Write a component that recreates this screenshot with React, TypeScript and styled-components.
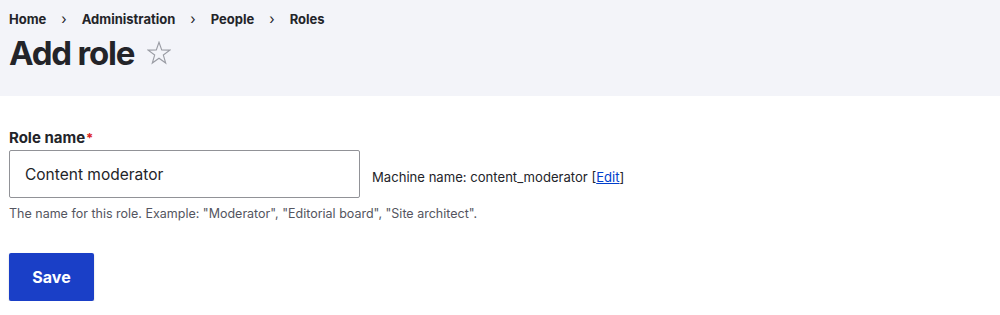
import React from 'react';
import styled, { createGlobalStyle } from 'styled-components';

const GlobalStyle = createGlobalStyle`
    body {
        margin: 0;
        background: #ffffff;
        font-family: Inter, "Liberation Sans", sans-serif;
        color: #232429;
    }
`;

const crumbs = ['Home', 'Administration', 'People', 'Roles'];

const App = () => {
    return (
        <>
            <GlobalStyle />
            <Header>
                <Breadcrumb>
                    {crumbs.map((c, i) => (
                        <React.Fragment key={c}>
                            {i > 0 && <Sep>›</Sep>}
                            <Crumb>{c}</Crumb>
                        </React.Fragment>
                    ))}
                </Breadcrumb>
                <TitleRow>
                    <Title>Add role</Title>
                    <Star viewBox="0 0 24 24" aria-label="Add to shortcuts">
                        <path
                            d="M12 1.2 L14.7 9 L22.8 9.1 L16.3 14 L18.7 22 L12 17.2 L5.3 22 L7.7 14 L1.2 9.1 L9.3 9 Z"
                            fill="none"
                            stroke="#9a9ca4"
                            strokeWidth="1.1"
                            strokeLinejoin="miter"
                        />
                    </Star>
                </TitleRow>
            </Header>
            <Main>
                <Label>
                    Role name<Required>*</Required>
                </Label>
                <FieldRow>
                    <Input defaultValue="Content moderator" />
                    <Machine>
                        Machine name: content_moderator [<EditLink href="#">Edit</EditLink>]
                    </Machine>
                </FieldRow>
                <Description>
                    The name for this role. Example: "Moderator", "Editorial board", "Site architect".
                </Description>
                <SaveButton>Save</SaveButton>
            </Main>
        </>
    );
};

export default App;

const Header = styled.div`
    background: #f3f4f9;
    height: 96px;
    box-sizing: border-box;
    padding: 11px 9px 0;
`;

const Breadcrumb = styled.div`
    display: flex;
    align-items: center;
    font-size: 13px;
    font-weight: 650;
    line-height: 16px;
    color: #232429;
`;

const Crumb = styled.span``;

const Sep = styled.span`
    margin: 0 15px 0 15px;
    font-weight: 400;
    font-size: 14px;
`;

const TitleRow = styled.div`
    display: flex;
    align-items: center;
    margin-top: 5px;
`;

const Title = styled.h1`
    margin: 0;
    font-size: 33px;
    line-height: 42px;
    font-weight: 700;
    letter-spacing: -1.2px;
    color: #232429;
`;

const Star = styled.svg`
    width: 24px;
    height: 24px;
    margin-left: 13px;
`;

const Main = styled.div`
    padding: 32px 9px 0;
`;

const Label = styled.div`
    font-size: 15px;
    font-weight: 700;
    line-height: 20px;
    margin-bottom: 2px;
`;

const Required = styled.span`
    color: #dc2323;
    font-size: 13px;
    margin-left: 1px;
    vertical-align: top;
`;

const FieldRow = styled.div`
    display: flex;
    align-items: center;
`;

const Input = styled.input`
    width: 351px;
    height: 48px;
    box-sizing: border-box;
    border: 1px solid #919297;
    border-radius: 2px;
    padding: 0 15px;
    font-family: Inter, "Liberation Sans", sans-serif;
    font-size: 15.5px;
    color: #232429;
    outline: none;
`;

const Machine = styled.span`
    margin-left: 12px;
    margin-top: 5px;
    font-size: 13.1px;
    color: #232429;
`;

const EditLink = styled.a`
    color: #003ecc;
    text-decoration: underline;
`;

const Description = styled.div`
    margin-top: 8px;
    font-size: 12.5px;
    line-height: 16px;
    color: #545560;
`;

const SaveButton = styled.button`
    margin-top: 31px;
    width: 85px;
    height: 48px;
    background: #1a3fc7;
    color: #ffffff;
    border: none;
    border-radius: 2px;
    box-shadow: 0 1px 2px rgba(0, 0, 0, 0.2);
    font-family: Inter, "Liberation Sans", sans-serif;
    font-size: 16px;
    font-weight: 700;
    cursor: pointer;
`;
